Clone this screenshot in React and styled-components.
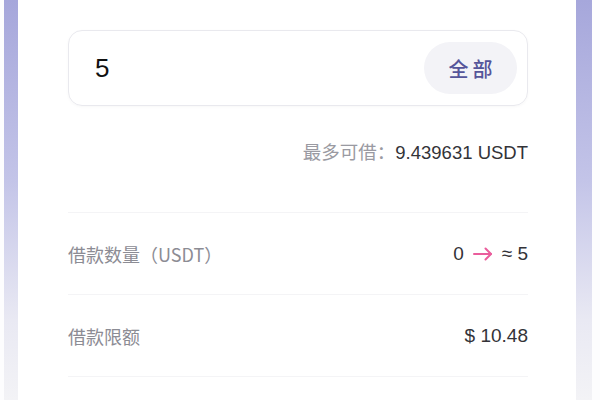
import React from 'react';
import styled, { createGlobalStyle } from 'styled-components';

const GlobalStyle = createGlobalStyle`
  * {
    box-sizing: border-box;
    margin: 0;
    padding: 0;
  }
  html, body {
    background: #ffffff;
    font-family: 'Noto Sans', 'Noto Sans CJK SC', sans-serif;
    -webkit-font-smoothing: antialiased;
  }
`;

const Page = styled.div`
  height: 400px;
  padding: 0 8px 0 4px;
  background: #fdfdfe;
`;

const Frame = styled.div`
  height: 100%;
  padding: 0 16px 0 14px;
  background: linear-gradient(180deg, #a6a7db 0%, #c3c4e8 45%, #e9e9f3 80%, #f3f3f6 100%);
`;

const Card = styled.div`
  height: 100%;
  background: #ffffff;
  padding: 30px 48px 0 50px;
  display: flex;
  flex-direction: column;
`;

const InputBox = styled.div`
  height: 76px;
  border: 1.5px solid #e9e9ee;
  border-radius: 14px;
  box-shadow: 0 1px 3px rgba(0, 0, 0, 0.03);
  display: flex;
  align-items: center;
  justify-content: space-between;
  padding: 0 10px 0 26px;
`;

const Amount = styled.span`
  font-family: 'Liberation Sans', Arial, sans-serif;
  font-size: 26px;
  color: #111111;
`;

const AllButton = styled.button`
  width: 93px;
  height: 52px;
  border: none;
  border-radius: 26px;
  background: #f3f3f7;
  color: #55559a;
  font-family: 'Noto Sans CJK SC', sans-serif;
  font-size: 20px;
  font-weight: 500;
  letter-spacing: 4px;
  padding-left: 4px;
`;

const MaxLine = styled.div`
  margin-top: 32px;
  text-align: right;
  font-family: 'Liberation Sans', Arial, 'Noto Sans CJK SC', sans-serif;
  font-size: 18.5px;
  color: #333338;
  line-height: 26px;
`;

const Muted = styled.span`
  font-family: 'Noto Sans CJK SC', sans-serif;
  color: #9a9aa2;
`;

const Divider = styled.div`
  height: 1px;
  background: #f4f4f6;
  margin-top: ${p => p.$top}px;
`;

const Row = styled.div`
  height: 81px;
  display: flex;
  align-items: center;
  justify-content: space-between;
`;

const Label = styled.span`
  font-family: 'Noto Sans CJK SC', sans-serif;
  font-size: 18px;
  color: #8c8c94;
`;

const Value = styled.span`
  font-family: 'Liberation Sans', Arial, sans-serif;
  font-size: 19px;
  color: #333338;
  display: flex;
  align-items: center;
  gap: 8px;
`;

const Arrow = () => (
  <svg width="22" height="16" viewBox="0 0 22 16" fill="none" stroke="#ea5d9c" strokeWidth="2" strokeLinecap="round" strokeLinejoin="round">
    <path d="M2 8h17" />
    <path d="M13.5 2.5l5.5 5.5-5.5 5.5" />
  </svg>
);

export default function App() {
  return (
    <>
      <GlobalStyle />
      <Page>
        <Frame>
          <Card>
            <InputBox>
              <Amount>5</Amount>
              <AllButton>全部</AllButton>
            </InputBox>
            <MaxLine>
              <Muted>最多可借：</Muted>9.439631 USDT
            </MaxLine>
            <Divider $top={46} />
            <Row>
              <Label>借款数量（USDT）</Label>
              <Value>0 <Arrow /> ≈ 5</Value>
            </Row>
            <Divider $top={0} />
            <Row>
              <Label>借款限额</Label>
              <Value>$ 10.48</Value>
            </Row>
            <Divider $top={0} />
          </Card>
        </Frame>
      </Page>
    </>
  );
}
